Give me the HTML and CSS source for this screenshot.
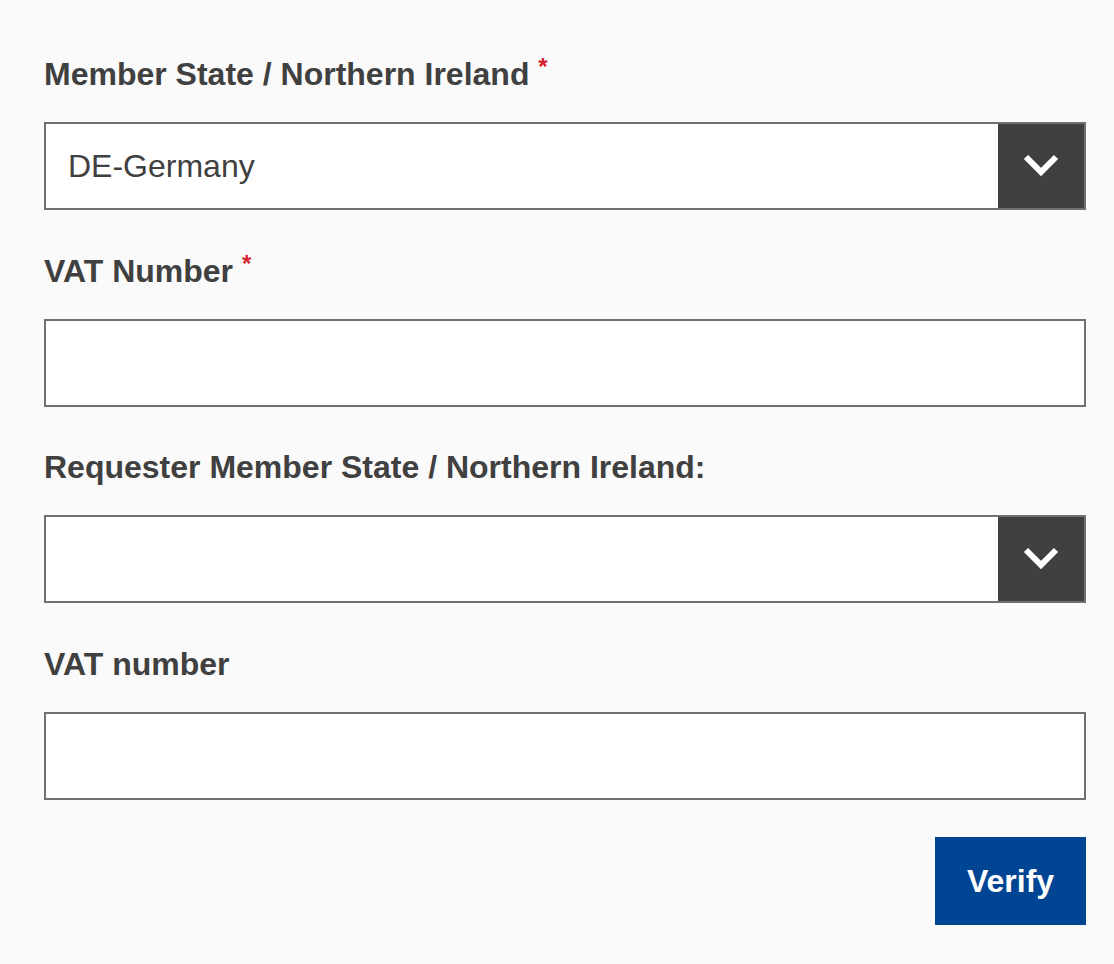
FILE: index.html
```html
<!DOCTYPE html>
<html lang="en">
<head>
<meta charset="utf-8">
<title>VAT number validation</title>
<link rel="stylesheet" href="styles.css">
</head>
<body>
<form class="form">
  <div class="field">
    <label class="label">Member State / Northern Ireland <span class="req">*</span></label>
    <div class="select">
      <span class="select-value">DE-Germany</span>
      <span class="select-btn">
        <svg width="36" height="26" viewBox="0 0 36 26"><path d="M3 4 L18 19 L33 4" fill="none" stroke="#fff" stroke-width="6"/></svg>
      </span>
    </div>
  </div>
  <div class="field">
    <label class="label">VAT Number <span class="req">*</span></label>
    <div class="input"></div>
  </div>
  <div class="field">
    <label class="label">Requester Member State / Northern Ireland:</label>
    <div class="select">
      <span class="select-value"></span>
      <span class="select-btn">
        <svg width="36" height="26" viewBox="0 0 36 26"><path d="M3 4 L18 19 L33 4" fill="none" stroke="#fff" stroke-width="6"/></svg>
      </span>
    </div>
  </div>
  <div class="field last">
    <label class="label">VAT number</label>
    <div class="input"></div>
  </div>
  <div class="actions">
    <button type="button" class="btn">Verify</button>
  </div>
</form>
</body>
</html>
```

FILE: styles.css
```css
html, body {
  margin: 0;
  padding: 0;
  background: #fafafa;
}
body {
  font-family: "Liberation Sans", Arial, sans-serif;
  color: #404040;
}
.form {
  padding: 56px 28px 0 44px;
}
.field {
  display: flex;
  flex-direction: column;
  margin-bottom: 42.67px;
}
.field.last {
  margin-bottom: 37px;
}
.label {
  font-size: 32px;
  font-weight: bold;
  line-height: 37px;
  margin-bottom: 29px;
  color: #404040;
}
.req {
  color: #d8202f;
  font-size: 24px;
  vertical-align: 10px;
  line-height: 0;
}
.select, .input {
  box-sizing: border-box;
  height: 88px;
  border: 2px solid #707070;
  background: #fff;
  display: flex;
  align-items: stretch;
}
.select-value {
  flex: 1;
  display: flex;
  align-items: center;
  padding-left: 22px;
  font-size: 32px;
  color: #404040;
}
.select-btn {
  width: 86px;
  background: #404040;
  display: flex;
  align-items: center;
  justify-content: center;
}
.select-btn svg {
  display: block;
}
.actions {
  display: flex;
  justify-content: flex-end;
}
.btn {
  width: 151px;
  height: 88px;
  border: 0;
  margin: 0;
  background: #004494;
  color: #fff;
  font-family: "Liberation Sans", Arial, sans-serif;
  font-size: 32px;
  font-weight: bold;
  padding: 0;
  padding-top: 2px;
}
```
